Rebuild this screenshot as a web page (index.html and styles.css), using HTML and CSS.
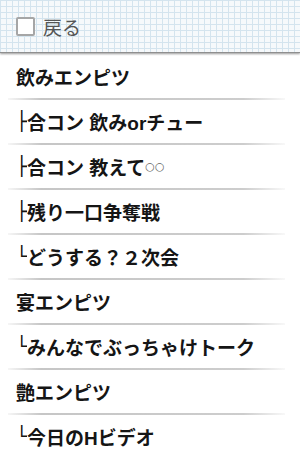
FILE: index.html
```html
<!DOCTYPE html>
<html lang="ja">
<head>
<meta charset="utf-8">
<link rel="stylesheet" href="styles.css">
</head>
<body>
<header class="bar">
  <span class="box"></span>
  <span class="back">戻る</span>
</header>
<ul class="list">
  <li class="row">飲みエンピツ</li>
  <li class="row"><span class="br">├</span>合コン 飲みorチュー</li>
  <li class="row"><span class="br">├</span>合コン 教えて<span class="circ">○○</span></li>
  <li class="row"><span class="br">├</span>残り一口争奪戦</li>
  <li class="row"><span class="br">└</span>どうする？２次会</li>
  <li class="row">宴エンピツ</li>
  <li class="row"><span class="br">└</span>みんなでぶっちゃけトーク</li>
  <li class="row">艶エンピツ</li>
  <li class="row last"><span class="br">└</span>今日のHビデオ</li>
</ul>
</body>
</html>
```
FILE: styles.css
```css
html, body {
  margin: 0;
  padding: 0;
  background: #fff;
}
body {
  width: 300px;
  height: 450px;
  overflow: hidden;
  font-family: "Liberation Sans", "Noto Sans CJK JP", sans-serif;
}
.bar {
  height: 53px;
  box-sizing: border-box;
  display: flex;
  align-items: center;
  gap: 8px;
  padding: 0 0 0 16px;
  background-color: #f6f9fb;
  background-image:
    linear-gradient(to right, #d4e4ee 1px, transparent 1px),
    linear-gradient(to bottom, #d4e4ee 1px, transparent 1px);
  background-size: 6px 6px;
  border-bottom: 1px solid #8f8f8f;
  box-shadow: 0 1px 2px rgba(0,0,0,0.4);
}
.box {
  flex: none;
  width: 15px;
  height: 15px;
  border: 2px solid #a6a6a6;
  border-radius: 2px;
  background: #fff;
}
.back {
  font-family: "Noto Sans CJK JP", sans-serif;
  font-size: 19px;
  color: #555;
  padding-top: 1px;
}
.list {
  list-style: none;
  margin: 2px 0 0 0;
  padding: 0;
}
.row {
  height: 45px;
  box-sizing: border-box;
  margin: 0 15px 0 8px;
  padding: 0 0 3px 8px;
  display: flex;
  align-items: center;
  font-size: 19px;
  font-weight: bold;
  color: #151515;
  white-space: nowrap;
  background-image: linear-gradient(to right, rgba(210,210,210,0.2), #c6c6c6 12%, #cdcdcd 85%, rgba(220,220,220,0.2));
  background-size: 100% 2px;
  background-position: bottom;
  background-repeat: no-repeat;
}
.row.last {
  background-image: none;
}
.br {
  font-family: "DejaVu Sans", sans-serif;
  font-weight: normal;
  display: inline-block;
  width: 11px;
  overflow: hidden;
}
.circ {
  font-family: "DejaVu Sans", sans-serif;
  font-weight: normal;
  font-size: 11px;
  color: #666;
}
```
